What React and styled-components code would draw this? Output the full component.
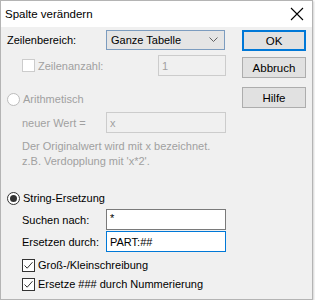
import React from "react";
import styled, { createGlobalStyle, css } from "styled-components";

const GlobalStyle = createGlobalStyle`
  html, body { margin: 0; padding: 0; background: #ffffff; }
  body { font-family: "Liberation Sans", Arial, sans-serif; font-size: 11px; color: #000; }
  * { box-sizing: border-box; }
`;

const Window = styled.div`
  width: 313px;
  height: 300px;
  border: 1px solid #b4b4b4;
  box-shadow: 1px 1px 2px rgba(0, 0, 0, 0.18);
  display: flex;
  flex-direction: column;
  background: #f0f0f0;
`;

const TitleBar = styled.div`
  height: 26px;
  background: #ffffff;
  display: flex;
  align-items: center;
  justify-content: space-between;
  padding: 0 8px 0 4px;
`;

const Title = styled.span`
  font-size: 11.5px;
  color: #000;
`;

const CloseIcon = () => (
  <svg width="14" height="14" viewBox="0 0 14 14">
    <path d="M1 1 L13 13 M13 1 L1 13" stroke="#000" strokeWidth="1.1" fill="none" />
  </svg>
);

const Body = styled.div`
  flex: 1;
  display: flex;
  padding: 3px 6px 0 6px;
  gap: 16px;
`;

const FormColumn = styled.div`
  width: 219px;
  display: flex;
  flex-direction: column;
`;

const SideColumn = styled.div`
  display: flex;
  flex-direction: column;
  width: 66px;
`;

const Row = styled.div`
  display: flex;
  align-items: center;
  height: ${(p) => p.$h || 20}px;
  margin-top: ${(p) => p.$mt || 0}px;
  padding-left: ${(p) => p.$indent || 0}px;
`;

const Label = styled.span`
  width: ${(p) => (p.$w ? `${p.$w}px` : "auto")};
  flex-shrink: 0;
  color: ${(p) => (p.$disabled ? "#a0a0a0" : "#000")};
  white-space: nowrap;
`;

const Select = styled.div`
  width: 119px;
  height: 20px;
  border: 1px solid #7c9cbf;
  background: #e5e5e5;
  display: flex;
  align-items: center;
  justify-content: space-between;
  padding: 0 6px 0 4px;
`;

const Chevron = () => (
  <svg width="9" height="6" viewBox="0 0 9 6">
    <path d="M0.5 0.5 L4.5 4.5 L8.5 0.5" stroke="#606060" strokeWidth="1" fill="none" />
  </svg>
);

const TextInput = styled.div`
  width: ${(p) => p.$w}px;
  height: ${(p) => p.$hgt || 21}px;
  border: 1px solid #7a7a7a;
  background: #fff;
  display: flex;
  align-items: ${(p) => (p.$top ? "flex-start" : "center")};
  padding: ${(p) => (p.$top ? "2px 3px 0" : "0 3px")};
  ${(p) =>
    p.$disabled &&
    css`
      border-color: #cccccc;
      background: #f0f0f0;
      color: #a0a0a0;
    `}
  ${(p) =>
    p.$focused &&
    css`
      border-color: #0078d7;
    `}
`;

const Box = styled.span`
  width: 13px;
  height: 13px;
  border: 1px solid ${(p) => (p.$disabled ? "#cccccc" : "#333333")};
  background: #fff;
  margin-right: 3px;
  display: inline-flex;
  align-items: center;
  justify-content: center;
  flex-shrink: 0;
`;

const Check = () => (
  <svg width="11" height="11" viewBox="0 0 11 11">
    <path d="M1.5 5.5 L4.2 8.2 L9.5 2.2" stroke="#333" strokeWidth="1" fill="none" />
  </svg>
);

const Radio = styled.span`
  width: 13px;
  height: 13px;
  border-radius: 50%;
  border: 1px solid ${(p) => (p.$disabled ? "#bcbcbc" : "#333333")};
  background: #fff;
  margin-right: 3px;
  display: inline-flex;
  align-items: center;
  justify-content: center;
  flex-shrink: 0;
  &::after {
    content: "";
    display: ${(p) => (p.$checked ? "block" : "none")};
    width: 7px;
    height: 7px;
    border-radius: 50%;
    background: #333;
  }
`;

const Hint = styled.div`
  color: #a0a0a0;
  line-height: 15px;
  padding-left: 15px;
  margin-top: ${(p) => p.$mt || 0}px;
`;

const Button = styled.div`
  height: 21px;
  margin-top: ${(p) => p.$mt || 0}px;
  border: 1px solid #adadad;
  background: #e1e1e1;
  display: flex;
  align-items: center;
  justify-content: center;
  font-size: 11.5px;
  ${(p) =>
    p.$default &&
    css`
      border: 2px solid #0078d7;
    `}
`;

export default function App() {
  return (
    <>
      <GlobalStyle />
      <Window>
        <TitleBar>
          <Title>Spalte verändern</Title>
          <CloseIcon />
        </TitleBar>
        <Body>
          <FormColumn>
            <Row $h={20}>
              <Label $w={99}>Zeilenbereich:</Label>
              <Select>
                <span>Ganze Tabelle</span>
                <Chevron />
              </Select>
            </Row>
            <Row $h={21} $mt={5} $indent={15}>
              <Box $disabled />
              <Label $w={120} $disabled>Zeilenanzahl:</Label>
              <TextInput $w={68} $disabled>1</TextInput>
            </Row>
            <Row $h={14} $mt={16}>
              <Radio $disabled />
              <Label $disabled>Arithmetisch</Label>
            </Row>
            <Row $h={21} $mt={6} $indent={15}>
              <Label $w={84} $disabled>neuer Wert =</Label>
              <TextInput $w={120} $disabled>x</TextInput>
            </Row>
            <Hint $mt={6}>
              Der Originalwert wird mit x bezeichnet.
              <br />
              z.B. Verdopplung mit 'x*2'.
            </Hint>
            <Row $h={14} $mt={22}>
              <Radio $checked />
              <Label>String-Ersetzung</Label>
            </Row>
            <Row $h={21} $mt={4} $indent={15}>
              <Label $w={84}>Suchen nach:</Label>
              <TextInput $w={120} $top>*</TextInput>
            </Row>
            <Row $h={21} $mt={1} $indent={15}>
              <Label $w={84}>Ersetzen durch:</Label>
              <TextInput $w={120} $focused>PART:##</TextInput>
            </Row>
            <Row $h={14} $mt={6} $indent={15}>
              <Box>
                <Check />
              </Box>
              <Label>Groß-/Kleinschreibung</Label>
            </Row>
            <Row $h={14} $mt={5} $indent={15}>
              <Box>
                <Check />
              </Box>
              <Label>Ersetze ### durch Nummerierung</Label>
            </Row>
          </FormColumn>
          <SideColumn>
            <Button $default>OK</Button>
            <Button $mt={6}>Abbruch</Button>
            <Button $mt={9}>Hilfe</Button>
          </SideColumn>
        </Body>
      </Window>
    </>
  );
}
